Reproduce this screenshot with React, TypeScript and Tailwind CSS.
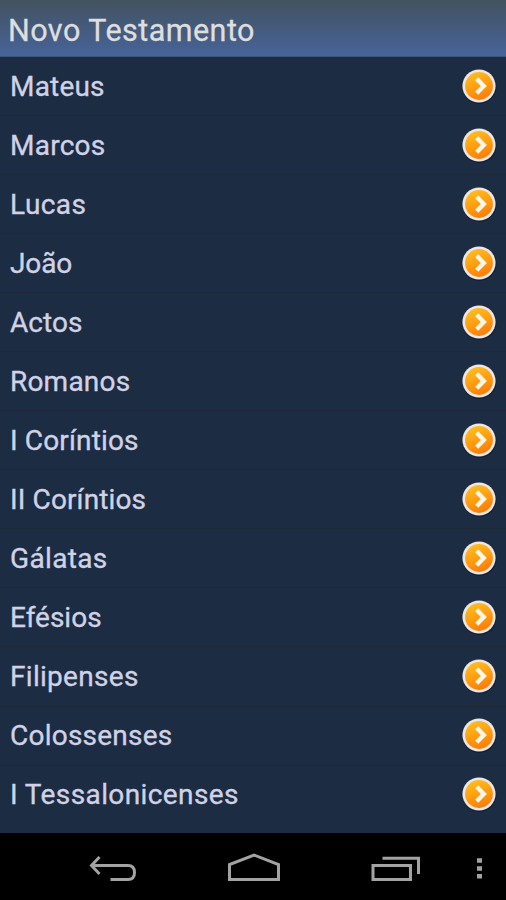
const books = [
  ['Mateus', 'tracking-[0.2px]'],
  ['Marcos', 'tracking-[0.25px]'],
  ['Lucas', 'tracking-[0.4px]'],
  ['João', 'tracking-[-0.1px]'],
  ['Actos', 'tracking-[0.05px]'],
  ['Romanos', 'tracking-[0.2px]'],
  ['I Coríntios', 'tracking-[0.15px]'],
  ['II Coríntios', 'tracking-[0.12px]'],
  ['Gálatas', 'tracking-[0.35px]'],
  ['Efésios', 'tracking-[0px]'],
  ['Filipenses', 'tracking-[0.3px]'],
  ['Colossenses', 'tracking-[0.23px]'],
  ['I Tessalonicenses', 'tracking-[0.4px]'],
];

function Arrow() {
  return (
    <svg width="36" height="38" viewBox="0 0 36 38" className="shrink-0">
      <defs>
        <linearGradient id="orange" x1="0.3" y1="0" x2="0.7" y2="1">
          <stop offset="0" stopColor="#ffbd20" />
          <stop offset="0.5" stopColor="#ff9d10" />
          <stop offset="1" stopColor="#fb7a08" />
        </linearGradient>
      </defs>
      <circle cx="18.4" cy="18.9" r="17" fill="#0b1628" opacity="0.6" />
      <circle cx="18" cy="18" r="16.6" fill="#ece7e6" />
      <circle cx="18" cy="18" r="13.9" fill="url(#orange)" />
      <path d="M15.700 10.700L22.800 18L15.700 25.300" fill="none" stroke="#fff6e8" strokeWidth="4.4" />
    </svg>
  );
}

export default function App() {
  return (
    <main className="flex h-[900px] w-[506px] flex-col overflow-hidden bg-[#1c2c42] font-['Roboto',sans-serif]">
      <header className="flex h-[57px] shrink-0 items-center border-b border-[#3e5578] bg-linear-to-b from-[#42525f] to-[#47639a] pt-[5px] pl-2 text-[30.5px] tracking-[0.47px] text-[#dedede] [-webkit-text-stroke:0.3px_#dedede]">
        <h1>Novo Testamento</h1>
      </header>
      <ul className="h-[776px] shrink-0">
        {books.map(([name, tracking]) => (
          <li key={name} className="flex h-[59.06px] items-center justify-between border-b border-[#1d2936] pt-[1.2px] pr-[9px] pl-[10px] text-[28px] text-[#d0d2e6] [-webkit-text-stroke:0.35px_#d0d2e6] last:border-transparent">
            <span className={tracking}>{name}</span>
            <Arrow />
          </li>
        ))}
      </ul>
      <nav className="h-[67px] shrink-0 bg-black">
        <svg width="506" height="67" viewBox="0 833 506 67" fill="none" stroke="#a3a3a3" strokeWidth="3">
          <path d="M99.500 857L91.500 865.500L99.500 874M91.500 865.500H128Q134.500 865.500 134.500 872.500T128 879.500H110.500" />
          <path d="M229.500 879.500V864.500L254 855L278.500 864.500V879.500Z" />
          <path d="M373 865.500H410.500V879.500H373ZM382.500 858.300H418.500V874" />
          <path d="M477 860.500h5M477 868.500h5M477 876.300h5" strokeWidth="4.500" />
        </svg>
      </nav>
    </main>
  );
}
